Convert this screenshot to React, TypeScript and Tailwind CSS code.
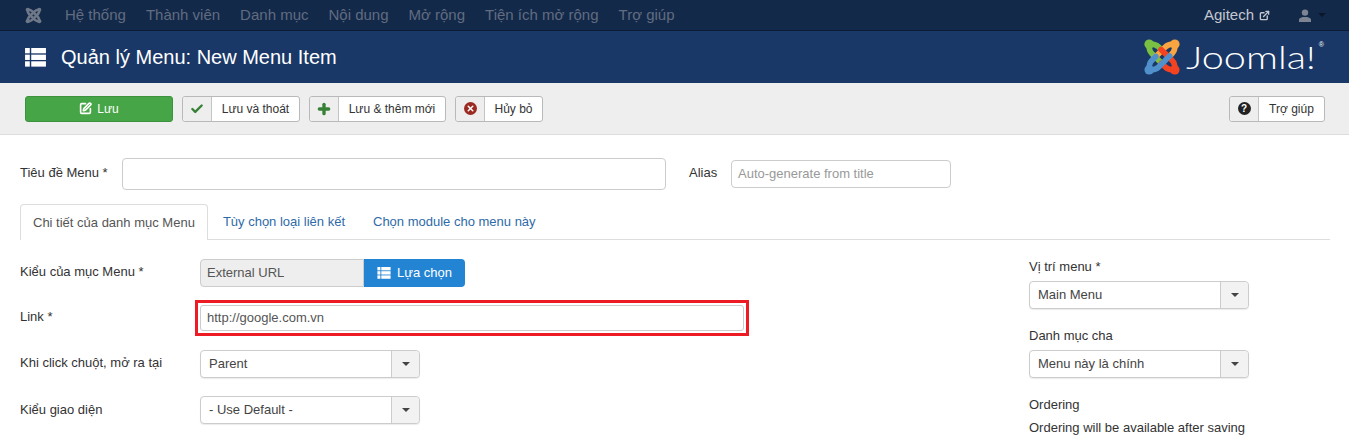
import { Check, Plus, SquarePen, X, ExternalLink } from "lucide-react";

const navItems = ["Hệ thống", "Thành viên", "Danh mục", "Nội dung", "Mở rộng", "Tiện ích mở rộng", "Trợ giúp"];

const JoomlaMark = ({ colors, size }: { colors: string[]; size: number }) => (
  <svg width={size} height={size} viewBox="0 0 40 40" fill="none" strokeLinecap="round" strokeLinejoin="round">
    {colors.map((color, i) => (
      <g key={i} transform={`rotate(${i * 90} 20 20)`} stroke={color} fill="none">
        <circle cx="6.5" cy="6.5" r="5" fill={color} stroke="none" />
        <path d="M21 28 L9.5 16.5 Q6 13 6.5 6.5 Q13 6 16.5 9.5 L20.5 13.5" strokeWidth="6" />
      </g>
    ))}
  </svg>
);

const GridIcon = ({ className }: { className: string }) => (
  <svg viewBox="0 0 22 20" className={className} fill="currentColor">
    <rect x="0" y="0" width="5" height="5.6" />
    <rect x="6.5" y="0" width="15.5" height="5.6" />
    <rect x="0" y="7" width="5" height="5.6" />
    <rect x="6.5" y="7" width="15.5" height="5.6" />
    <rect x="0" y="14" width="5" height="5.6" />
    <rect x="6.5" y="14" width="15.5" height="5.6" />
  </svg>
);

const ToolButton = ({ icon, label, width }: { icon: React.ReactNode; label: string; width: string }) => (
  <div className={`flex h-[26px] ${width} rounded-[3px] border border-[#b9b9b9] bg-white text-[12px] text-[#333]`}>
    <div className="flex w-[29px] shrink-0 items-center justify-center rounded-l-[3px] border-r border-[#c4c4c4] bg-[#eeeeee]">{icon}</div>
    <div className="flex flex-1 items-center justify-center">{label}</div>
  </div>
);

const Select = ({ value }: { value: string }) => (
  <div className="flex h-[28px] w-[220px] rounded-[4px] border border-[#cccccc] bg-white text-[13px] text-[#444] shadow-[0_1px_1px_rgba(0,0,0,0.08)]">
    <div className="flex flex-1 items-center pl-2">{value}</div>
    <div className="flex w-[28px] items-center justify-center rounded-r-[4px] border-l border-[#cccccc] bg-[#f2f2f2]">
      <div className="h-0 w-0 border-x-[4px] border-t-[4px] border-x-transparent border-t-[#444]" />
    </div>
  </div>
);

const Row = ({ label, children, className, labelClass }: { label: string; children: React.ReactNode; className: string; labelClass: string }) => (
  <div className={`flex items-center ${className}`}>
    <div className={`w-[180px] shrink-0 text-[13px] text-[#333] ${labelClass}`}>{label}</div>
    {children}
  </div>
);

export default function App() {
  return (
    <div className="h-[446px] overflow-hidden bg-white font-['Liberation_Sans',Arial,sans-serif]">
      <nav className="flex h-[31px] items-center border-b border-[#0c1c36] bg-[#13294a] pl-[25px] pr-[23px] text-[15px] text-[#616c80]">
        <JoomlaMark colors={["#6f7888", "#6f7888", "#6f7888", "#6f7888"]} size={17} />
        <div className="ml-[23px] flex gap-[20px]">
          {navItems.map((item) => (
            <span key={item}>{item}</span>
          ))}
        </div>
        <div className="ml-auto flex items-center text-[#c3c7cf]">
          Agitech
          <ExternalLink className="ml-[5px] h-[11px] w-[11px]" strokeWidth={3} />
        </div>
        <div className="ml-[29px] flex items-center gap-[7px]">
          <svg viewBox="0 0 12 13" className="h-[13px] w-[12px] text-[#7d8593]" fill="currentColor">
            <circle cx="6" cy="3.6" r="3.2" />
            <path d="M0 13 V10.5 Q0 9 4 8 H8 Q12 9 12 10.5 V13 Z" />
          </svg>
          <div className="h-0 w-0 border-x-[4px] border-t-[4px] border-x-transparent border-t-[#0a1629]" />
        </div>
      </nav>

      <header className="flex h-[52px] items-center bg-[#1a3867] pl-[25px] pr-[25px] text-white">
        <GridIcon className="h-[19px] w-[21px]" />
        <h1 className="ml-[15px] text-[20px] leading-none">Quản lý Menu: New Menu Item</h1>
        <div className="ml-auto flex items-center">
          <JoomlaMark colors={["#7ac143", "#f9a541", "#f44321", "#5091cd"]} size={38} />
          <div className="relative ml-[5px] h-[34px] w-[138px]">
            <span className="block origin-left scale-x-[1.24] font-['Lato',sans-serif] text-[32px] font-light leading-[34px]">Joomla!</span>
            <span className="absolute right-0 top-[1px] text-[7px] leading-none">®</span>
          </div>
        </div>
      </header>

      <div className="flex h-[52px] items-center gap-[9px] border-b border-[#dddddd] bg-[#eeeeee] pl-[25px] pr-[24px]">
        <div className="flex h-[26px] w-[148px] items-center justify-center gap-[5px] rounded-[3px] border border-[#3d933d] bg-[#46a546] text-[12px] text-white">
          <SquarePen className="h-[13px] w-[13px]" strokeWidth={3} />
          Lưu
        </div>
        <ToolButton width="w-[118px]" label="Lưu và thoát" icon={<Check className="h-[14px] w-[14px] text-[#378137]" strokeWidth={4} />} />
        <ToolButton width="w-[137px]" label="Lưu & thêm mới" icon={<Plus className="h-[16px] w-[16px] text-[#378137]" strokeWidth={5} />} />
        <ToolButton
          width="w-[88px]"
          label="Hủy bỏ"
          icon={
            <div className="flex h-[13px] w-[13px] items-center justify-center rounded-full bg-[#9b2a23]">
              <X className="h-[9px] w-[9px] text-white" strokeWidth={4} />
            </div>
          }
        />
        <div className="ml-auto">
          <ToolButton
            width="w-[96px]"
            label="Trợ giúp"
            icon={<div className="flex h-[13px] w-[13px] items-center justify-center rounded-full bg-[#222] text-[10px] font-bold leading-none text-white">?</div>}
          />
        </div>
      </div>

      <main className="pl-[20px] pr-[19px] pt-[23px]">
        <div className="flex items-center text-[13px] text-[#333]">
          <div className="w-[102px] pb-[2px]">Tiêu đề Menu *</div>
          <div className="h-[32px] w-[544px] rounded-[4px] border border-[#cccccc]" />
          <div className="ml-[23px] w-[42px] pb-[2px]">Alias</div>
          <div className="flex h-[28px] w-[220px] items-center rounded-[4px] border border-[#cccccc] pl-[6px] text-[#999]">Auto-generate from title</div>
        </div>

        <div className="mt-[14px] flex h-[36px] border-b border-[#dddddd] text-[13px] text-[#2f6aa8]">
          <div className="h-[36px] rounded-t-[4px] border border-b-0 border-[#dddddd] bg-white px-[12px] pt-[8px] text-[#555]">Chi tiết của danh mục Menu</div>
          <div className="ml-[15px] pt-[8px]">Tùy chọn loại liên kết</div>
          <div className="ml-[28px] pt-[8px]">Chọn module cho menu này</div>
        </div>

        <div className="flex">
          <div className="w-[1009px]">
            <Row label="Kiểu của mục Menu *" className="mt-[19px]" labelClass="pb-[2px]">
              <div className="flex h-[28px] w-[265px] text-[13px]">
                <div className="flex w-[164px] items-center rounded-l-[4px] border border-[#cccccc] bg-[#eeeeee] pl-[6px] text-[#555]">External URL</div>
                <div className="flex flex-1 items-center justify-center gap-[6px] rounded-r-[4px] bg-[#2384d3] text-white">
                  <GridIcon className="h-[12px] w-[14px]" />
                  Lựa chọn
                </div>
              </div>
            </Row>
            <Row label="Link *" className="mt-[13px]" labelClass="pb-[2px]">
              <div className="-ml-[5px] border-[3px] border-[#ed1c24] p-[2px]">
                <div className="flex h-[26px] w-[544px] items-center rounded-[3px] border border-[#cccccc] pl-[6px] text-[13px] text-[#555]">http://google.com.vn</div>
              </div>
            </Row>
            <Row label="Khi click chuột, mở ra tại" className="mt-[14px]" labelClass="pb-[2px]">
              <Select value="Parent" />
            </Row>
            <Row label="Kiểu giao diện" className="mt-[18px]" labelClass="pb-0">
              <Select value="- Use Default -" />
            </Row>
          </div>
          <aside className="w-[220px] pt-[20px] text-[13px] leading-[14px] text-[#333]">
            <div className="mb-[7px]">Vị trí menu *</div>
            <Select value="Main Menu" />
            <div className="mb-[7px] mt-[20px]">Danh mục cha</div>
            <Select value="Menu này là chính" />
            <div className="mt-[20px]">Ordering</div>
            <div className="mt-[9px] whitespace-nowrap">Ordering will be available after saving</div>
          </aside>
        </div>
      </main>
    </div>
  );
}
